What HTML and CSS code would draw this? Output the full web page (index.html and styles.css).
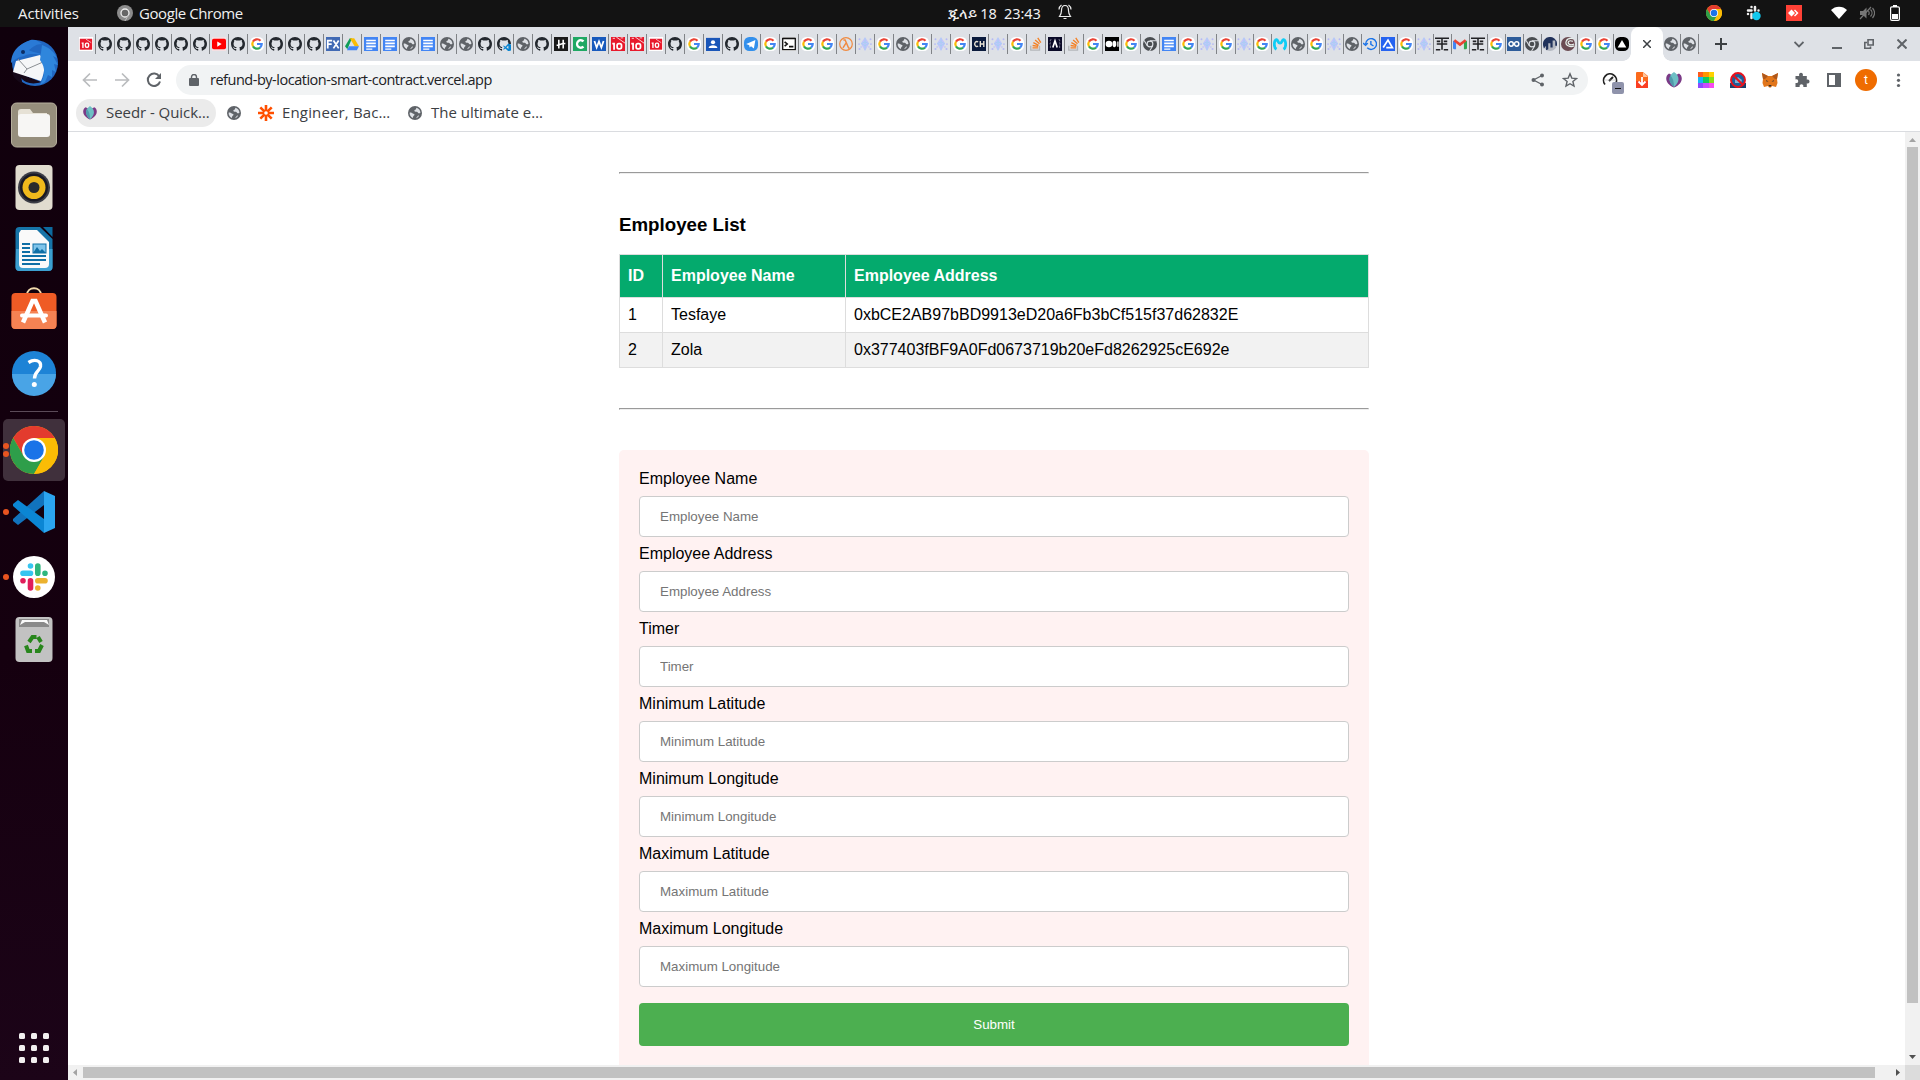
FILE: index.html
```html
<!DOCTYPE html>
<html lang="en">
<head>
<meta charset="utf-8">
<title>Refund by location</title>
<link rel="stylesheet" href="styles.css">
</head>
<body>
<svg class="defs" width="0" height="0">
  <symbol id="gh" viewBox="0 0 16 16"><path fill="#24292f" fill-rule="evenodd" d="M8 0C3.58 0 0 3.58 0 8c0 3.54 2.29 6.53 5.47 7.59.4.07.55-.17.55-.38 0-.19-.01-.82-.01-1.49-2.01.37-2.53-.49-2.69-.94-.09-.23-.48-.94-.82-1.13-.28-.15-.68-.52-.01-.53.63-.01 1.08.58 1.23.82.72 1.21 1.87.87 2.33.66.07-.52.28-.87.51-1.07-1.78-.2-3.64-.89-3.64-3.95 0-.87.31-1.59.82-2.15-.08-.2-.36-1.02.08-2.12 0 0 .67-.21 2.2.82a7.6 7.6 0 0 1 4 0c1.53-1.04 2.2-.82 2.2-.82.44 1.1.16 1.92.08 2.12.51.56.82 1.27.82 2.15 0 3.07-1.87 3.75-3.65 3.95.29.25.54.73.54 1.48 0 1.07-.01 1.93-.01 2.2 0 .21.15.46.55.38A8.01 8.01 0 0 0 16 8c0-4.42-3.58-8-8-8z"/></symbol>
  <symbol id="ghv" viewBox="0 0 16 16"><use href="#gh"/><path fill="#dee1e6" d="M6 8h10v8H6z"/><path fill="#0a84d0" d="M13 7.500l3 1.200v6.600l-3 1-3.500-3.200-1.700 1.400-.8-.7 1.700-1.600L7 10.400l.8-.7 1.700 1.400zM13 10l-2.300 1.800L13 13.600z"/></symbol>
  <symbol id="g" viewBox="0 0 16 16"><rect width="16" height="16" rx="6" fill="#fff"/><g fill="none" stroke-width="2.500"><path stroke="#ea4335" d="M3.400 5.300A5.400 5.400 0 0 1 12 4.300"/><path stroke="#fbbc05" d="M3.400 10.700a5.400 5.400 0 0 1 0-5.400"/><path stroke="#34a853" d="M11.500 12.100a5.400 5.400 0 0 1-8.100-1.400"/><path stroke="#4285f4" d="M8 8h5.400a5.400 5.400 0 0 1-1.900 4.100"/></g></symbol>
  <symbol id="globe" viewBox="0 0 16 16"><circle cx="8" cy="8" r="8" fill="#5f6368"/><path fill="#dee1e6" d="M1.800 7.700c1.200-.3 2.500-.2 3.200.5.500.7 1.800.4 2.300 1.200.4.700-.2 1.500-1 1.900-.7.400-.5 1.800-.6 2.500C3.400 12.900 1.700 10.600 1.800 7.700zM9.700 2c2.600.8 4.400 3 4.500 5.700-.7.500-1.500.9-2.300.5-.9-.5-.8-1.600-1.900-1.700-1-.1-2.300.3-2.700-.7-.3-1 .8-1.400 1.500-1.700.7-.4.200-1.300.9-2.100zM9.500 14c-.1-1 .8-1.200 1.200-2 .4-.7.900-1.200 2-1.100-.7 1.500-1.900 2.600-3.200 3.100z"/></symbol>
  <symbol id="docs" viewBox="0 0 16 16"><path fill="#4285f4" d="M0 0h16v16H0z"/><path fill="#fff" d="M2.500 3h11v1.800h-11zM2.500 6.400h11v1.800h-11zM2.500 9.800h11v1.800h-11zM2.500 13h7v1.500h-7z"/></symbol>
  <symbol id="io" viewBox="0 0 16 16"><path fill="#e8192c" d="M0 0h16v16H0z"/><path stroke="#fff" stroke-width=".9" fill="none" d="M6 0l10 7M2 1.500h2.500M11 1h3"/><path stroke="#fff" stroke-width="2" fill="none" d="M1.500 7.500h2V14.500"/><rect x="7" y="7.500" width="5" height="6" rx="2" fill="none" stroke="#fff" stroke-width="2"/></symbol>
  <symbol id="iow" viewBox="0 0 16 16"><path fill="#fff" d="M0 0h16v16H0z"/><path fill="#e8192c" d="M1 2h14v12.500H1z"/><path stroke="#fff" stroke-width="1.600" fill="none" d="M3 7h1.500v5.500"/><rect x="7.300" y="7" width="3.700" height="4.700" rx="1.500" fill="none" stroke="#fff" stroke-width="1.600"/><path stroke="#fff" stroke-width=".7" d="M8 2.500l6 4"/></symbol>
  <symbol id="yt" viewBox="0 0 16 16"><path fill="#f5dfe2" d="M0 0h16v16H0z"/><rect y="2" width="16" height="12" rx="2" fill="#f00"/><path fill="#fff" d="M6 5l5 3-5 3z"/></symbol>
  <symbol id="fx" viewBox="0 0 16 16"><path fill="#416ab4" d="M0 0h16v16H0z"/><path stroke="#fff" stroke-width="2" fill="none" d="M2 13V4h5M2 8h4.500M8.500 4l6 9M14.500 4l-6 9"/></symbol>
  <symbol id="drive" viewBox="0 0 16 16"><path fill="#0f9d58" d="M5.500 1.500h2.500L2.700 14 0 10.500z"/><path fill="#fbbc04" d="M5.500 1.500h5L16 10.500h-5z"/><path fill="#4285f4" d="M4.500 10.500H16L13.500 15H2.200z"/></symbol>
  <symbol id="hh" viewBox="0 0 16 16"><path fill="#1a1a1a" d="M0 0h16v16H0z"/><path stroke="#fff" stroke-width="1.800" fill="none" d="M5.500 3v10M10.500 3v10M3 9.500c3 0 3.500-2 10-2"/></symbol>
  <symbol id="cc" viewBox="0 0 16 16"><path fill="#1fa863" d="M0 0h16v16H0z"/><path stroke="#fff" stroke-width="2.600" fill="none" d="M12 5a4.300 4.300 0 1 0 0 6"/></symbol>
  <symbol id="ww" viewBox="0 0 16 16"><path fill="#185abd" d="M0 0h16v16H0z"/><path stroke="#fff" stroke-width="2" fill="none" d="M2.800 4.500L5.300 12 8 5l2.700 7 2.500-7.500"/></symbol>
  <symbol id="contact" viewBox="0 0 16 16"><path fill="#1a56b8" d="M0 1h16v15H0z"/><circle cx="8" cy="6" r="2.400" fill="#fff"/><path fill="#fff" d="M3 12.500c0-4 10-4 10 0z"/></symbol>
  <symbol id="tg" viewBox="0 0 16 16"><rect width="16" height="16" rx="6" fill="#3390ec"/><path fill="#fff" d="M2.500 8L13 3.500 11.300 13 8 10.500l-1.600 1.600L6 9.500z"/></symbol>
  <symbol id="term" viewBox="0 0 16 16"><path fill="#fff" d="M0 0h16v16H0z"/><path fill="none" stroke="#111" stroke-width="1.500" d="M.8 1.500h14.400v13H.8z"/><path fill="none" stroke="#111" stroke-width="1.800" d="M3 5.500L6 8l-3 2.500M8 11h5M.8 1.700h14.400"/></symbol>
  <symbol id="lam" viewBox="0 0 16 16"><circle cx="8" cy="8" r="7.200" fill="none" stroke="#f08a40" stroke-width="1.400"/><path stroke="#f08a40" stroke-width="1.700" fill="none" d="M5 3.500h2l4 9h1.200M8 7l-3.500 5.500"/></symbol>
  <symbol id="eth" viewBox="0 0 16 16"><path fill="#c3c5fb" d="M8 0l4.800 7.500L8 16 3.200 7.500z"/><path fill="none" stroke="#a5cff2" d="M8 1v14M4 7.500l4-2 4 2-4 2.500z"/><g fill="#b5b9f6"><circle cx="1.700" cy="2.500" r="1.100"/><circle cx="14.300" cy="2.500" r="1.100"/><circle cx="1.200" cy="8" r="1"/><circle cx="14.800" cy="8" r="1"/><circle cx="1.700" cy="13.700" r="1.200"/><circle cx="14.300" cy="13.700" r="1.200"/><circle cx="3.500" cy="11.500" r=".8"/><circle cx="12.500" cy="11.500" r=".8"/></g></symbol>
  <symbol id="ch" viewBox="0 0 16 16"><path fill="#0a1a3c" d="M0 0h16v16H0z"/><path stroke="#e8e2d4" stroke-width="1.600" fill="none" d="M7 5.700a2.500 2.800 0 1 0 0 4.600M9.500 4.500v7M13.500 4.500v7M9.500 8h4"/></symbol>
  <symbol id="so" viewBox="0 0 16 16"><path fill="none" stroke="#b4b7bb" stroke-width="1.500" d="M2 10v5h10v-5"/><path fill="none" stroke="#f48024" stroke-width="1.500" d="M4 12.500h6.500M4.100 9.700l6.400 1M5 6.500l6 3M7 3.500l5 4.300M10 1l3.500 5.500"/></symbol>
  <symbol id="aa" viewBox="0 0 16 16"><path fill="#0a0a28" d="M0 0h16v16H0z"/><path fill="none" stroke="#fff" stroke-width="1.900" d="M5.500 12L8 4.500l2.500 7.500"/><path fill="none" stroke="#99a" stroke-width="1" stroke-dasharray="2.500 1.500" d="M3.500 2.500c-2 2 .5 3.500-1.500 5.500 2 2-.5 4 1.500 5.500M12.500 2.500c2 2-.5 3.500 1.500 5.500-2 2 .5 4-1.500 5.500"/></symbol>
  <symbol id="med" viewBox="0 0 16 16"><path d="M0 0h16v16H0z"/><circle cx="4.500" cy="8" r="3.800" fill="#fff"/><ellipse cx="10.700" cy="8" rx="2.200" ry="3.600" fill="#fff"/><path fill="#fff" d="M14 5h1.500v6H14z"/></symbol>
  <symbol id="chg" viewBox="0 0 16 16"><circle cx="8" cy="8" r="8" fill="#4a4d51"/><circle cx="8" cy="8" r="3.300" fill="#4a4d51" stroke="#dee1e6" stroke-width="1.300"/><path stroke="#dee1e6" stroke-width="1.200" d="M8 4.300h7M4.900 10L1.300 4M11.200 10L7.500 16"/></symbol>
  <symbol id="mm" viewBox="0 0 16 16"><path fill="none" stroke="#10cdf5" stroke-width="3.200" d="M4 14C0 11.500 1.500 2.500 4 3c2 .5 1.500 4 4 4s2-3.500 4-4c2.500-.5 4 8.500 0 11"/></symbol>
  <symbol id="hist" viewBox="0 0 16 16"><path fill="none" stroke="#1a73e8" stroke-width="1.600" d="M3 8a6.200 6.200 0 1 1 1.800 4.400M9 4.500V8.500l3 1.800M0 7l3 2.500L5.500 7"/></symbol>
  <symbol id="al" viewBox="0 0 16 16"><path fill="#2563f0" d="M0 0h16v16H0z"/><path fill="none" stroke="#fff" stroke-width="2" d="M2.500 12L8 3.500l5 8.500H6"/></symbol>
  <symbol id="ww2" viewBox="0 0 16 16"><path fill="none" stroke="#202124" stroke-width="1.800" d="M0 1.500h16M8 1.500v13M2 8h12M1 14.500h5M10 14.500h5M2 5h4M10 5h4"/></symbol>
  <symbol id="gm" viewBox="0 0 16 16"><path fill="#4285f4" d="M0 4l3.500 2v8H1.200L0 13z"/><path fill="#34a853" d="M16 4l-3.500 2v8h2.300l1.200-1z"/><path fill="none" stroke="#ea4335" stroke-width="3" d="M1.500 3.700L8 8.700l6.500-5"/></symbol>
  <symbol id="co" viewBox="0 0 16 16"><path fill="#2d5c9a" d="M0 0h16v16H0z"/><g fill="none" stroke="#fff" stroke-width="1.700"><circle cx="4.700" cy="8" r="2.500"/><circle cx="11" cy="8" r="2.500"/></g></symbol>
  <symbol id="bars" viewBox="0 0 16 16"><circle cx="8" cy="8" r="8" fill="#b4b8c1"/><path fill="#21325b" d="M0 9A8 8 0 0 1 16 7v3h-2V4h-3v8H8.500V7H6v7L3.500 15v-5L1 13z"/></symbol>
  <symbol id="swirl" viewBox="0 0 16 16"><circle cx="8" cy="8" r="8" fill="#6b4b52"/><path stroke="#e8f3ee" stroke-width="1.400" fill="none" d="M14 2C5 0 4 8 8 10s7 0 7 0M13.500 5C9 3 7 6 9 8s6 0 6 0"/></symbol>
  <symbol id="vc" viewBox="0 0 16 16"><rect width="16" height="16" rx="6"/><path fill="#fff" d="M8 3.500l5 8.500H3z"/></symbol>
  <symbol id="chrome" viewBox="0 0 48 48"><circle cx="24" cy="24" r="24" fill="#fbbc05"/><path fill="#e33b2e" d="M24 12h20.800A24 24 0 0 0 3.200 12l10.400 18z"/><path fill="#2e9e4a" d="M3.200 12A24 24 0 0 0 24 48l10.400-18L24 24l-10.400 6z"/><path fill="#fbbc05" d="M44.800 12H24l10.400 18L24 48a24 24 0 0 0 20.800-36z"/><circle cx="24" cy="24" r="12" fill="#fff"/><circle cx="24" cy="24" r="9.800" fill="#1a73e8"/></symbol>
  <symbol id="seedr" viewBox="0 0 16 16"><path fill="#7a3a86" d="M3 1.500C-1.500 4-1 12 8 15.500 17 12 17.500 4 13 1.500L8 4z"/><path fill="#6dbfc4" d="M8 0c6 4 6 10 0 15C2 10 2 4 8 0z"/><path fill="#4f9aab" d="M8 15C3 11 2.800 6.500 4.500 3.500 7 6 8 10 8 15z"/></symbol>
  <symbol id="slack" viewBox="0 0 28 28"><g stroke-width="5.600" stroke-linecap="round"><path stroke="#36c5f0" d="M3 10.200h7.500M10.500 3v0"/><path stroke="#2eb67d" d="M17.800 3v7.200M25 10.200v0"/><path stroke="#ecb22e" d="M17.800 17.700h7.200M17.800 25v0"/><path stroke="#e01e5a" d="M10.500 17.700v7.300M3 17.700v0"/></g></symbol>
</svg>

<header class="topbar">
  <span class="activities">Activities</span>
  <div class="app-menu">
    <svg class="i16" viewBox="0 0 16 16"><circle cx="8" cy="8" r="8" fill="#8c8c8c"/><circle cx="8" cy="8" r="4" fill="#666" stroke="#eee" stroke-width="1.300"/><path stroke="#bbb" d="M11.500 10L8 16"/></svg>
    <span>Google Chrome</span>
  </div>
  <div class="clock">
    <span>ጁላይ 18&nbsp; 23:43</span>
    <svg width="14" height="16" viewBox="0 0 14 16" fill="none" stroke="#eee" stroke-width="1.200"><path d="M7 1.500C4 1.500 3.500 4 3.500 6.500c0 3-.5 4-2 6h11c-1.500-2-2-3-2-6C10.500 4 10 1.500 7 1.500zM5.500 14.500h3M3.500 1C2 2 1 3.500 1 5.500M10.500 1C12 2 13 3.500 13 5.500"/></svg>
  </div>
  <div class="tray">
    <svg class="i16" viewBox="0 0 48 48"><use href="#chrome"/></svg>
    <svg class="tray-slack" width="16" height="16" viewBox="0 0 16 16"><g stroke="#eee" stroke-width="2.500" stroke-linecap="round"><path d="M2 5.500h3.500M5.500 2v0M9 2v3.500M12.500 5.500v0M2 9v0M5.500 9v4"/></g><circle cx="10.500" cy="11" r="4.200" fill="#12c8ee"/></svg>
    <svg class="i16 tray-any" viewBox="0 0 16 16"><path fill="#ff4136" d="M0 0h16v16H0z"/><path fill="#fff" d="M5.500 4.500L9 8l-3.500 3.500L2 8zM9 4.500L12.500 8 9 11.500l-1-1L10.500 8 8 5.500z"/></svg>
    <svg class="tray-wifi" width="16" height="14" viewBox="0 0 16 14"><path fill="#fff" d="M0 4C4-.5 12-.5 16 4L8 13z"/></svg>
    <svg class="tray-mute" width="16" height="14" viewBox="0 0 16 14"><path fill="#777" d="M1 5h3l3.500-3.500v11L4 9H1z"/><path fill="none" stroke="#777" stroke-width="1.200" d="M1 13L12 1M9.500 5c1 1.500 1 2.500 0 4M11.500 3.500c2 2 2 5 0 7M13.500 2c2.500 3 2.500 7 0 10"/></svg>
    <svg class="tray-batt" width="10" height="16" viewBox="0 0 10 16"><path fill="#fff" d="M3 0h4v2H3zM2 9h6v5H2z"/><rect x=".6" y="1.800" width="8.800" height="13.600" rx="1.300" fill="none" stroke="#fff" stroke-width="1.200"/></svg>
  </div>
</header>

<div class="desktop">
  <nav class="dock">
    <div class="dock-item"><svg viewBox="0 0 48 48"><circle cx="25" cy="24" r="23" fill="#2167c2"/><path fill="#160818" d="M3 32l6 2 22 9c-8 3-16 1-20-4 2 4 0 5 2 6C6 42 1 36 3 32z"/><path fill="#f5f6f8" d="M6 22l24-6c6 6 5 17 1 26L3 33z"/><path fill="none" stroke="#8b8f94" d="M8 20l9 10 16-7M17 30l-3 4"/><path fill="#2a7ad6" d="M1 24C2 10 10 6 18 2c6-3 10 0 14 3-6 0-9 3-13 6 2 2 9 2 14 5-8-1-14-2-19 1C8 18 4 21 1 24z"/><path fill="#2f86dc" d="M32 6c8 3 12 7 15 13l-4-2 5 9-4-1 2 8-4-2v7l-4-2-3 7-5 3c5-9 6-17 0-25z"/><circle cx="13" cy="13" r="2" fill="#0b2d66"/></svg></div>
    <div class="dock-item"><svg viewBox="0 0 48 48"><rect x="1.500" y="2" width="45" height="44" rx="5" fill="#968e7c" stroke="#b6af9d"/><path fill="#e6e1d5" d="M8 14v-3c0-2 1-3 3-3h9l3 4h14v6H8z"/><rect x="8" y="13" width="32" height="23" rx="3" fill="#f7f6f4"/></svg></div>
    <div class="dock-item"><svg viewBox="0 0 48 48"><rect x="5.500" y="2" width="37" height="45" rx="4" fill="#e1dccf"/><circle cx="24" cy="24.500" r="16" fill="#3c3d46"/><circle cx="24" cy="24.500" r="14" fill="#1a1a24"/><circle cx="24" cy="24.500" r="11.500" fill="#f0b91c"/><circle cx="24" cy="24.500" r="5.500" fill="#2b2b2b"/></svg></div>
    <div class="dock-item"><svg viewBox="0 0 48 48"><path fill="#1674a8" d="M10 2h20l12.500 12v28a4 4 0 0 1-4 4h-29a4 4 0 0 1-4-4V6a4 4 0 0 1 4-4z"/><path fill="#3c9fd0" d="M6 24h36.500v18a4 4 0 0 1-4 4h-29a4 4 0 0 1-4-4z"/><path fill="#fafafa" d="M11 5h16l12 12v22a4 4 0 0 1-4 4H13a4 4 0 0 1-4-4V8z"/><path fill="#0c6a9e" d="M33 2h9.500v10z"/><path stroke="#0f6fa6" stroke-width="1.800" d="M12 19h8M12 23h8M12 27h8M12 31h24M12 35h24M12 39h18"/><rect x="23" y="19" width="13" height="9" fill="#7fc4ea" stroke="#0f6fa6"/><path fill="#0f6fa6" d="M23 28l4-6 3 4 2-2 4 4z"/></svg></div>
    <div class="dock-item"><svg class="raised" viewBox="0 0 48 48"><path fill="none" stroke="#f3dcae" stroke-width="1.800" d="M17 9c0-9 14-9 14 0"/><rect x="1.500" y="7" width="45" height="36" rx="4" fill="#ef5b25"/><path fill="#f58253" d="M1.500 25h45v14a4 4 0 0 1-4 4h-37a4 4 0 0 1-4-4z"/><path fill="none" stroke="#fff" stroke-width="4.500" d="M13 36.500L22.500 15h3L35 36.500"/><path stroke="#fff" stroke-width="4" stroke-linecap="round" d="M12 29.500h24"/></svg></div>
    <div class="dock-item"><svg viewBox="0 0 48 48"><circle cx="24" cy="24" r="22" fill="#1d83d6"/><path fill="#49a4e6" d="M2 25h44a22 22 0 0 1-44 0z"/><path fill="none" stroke="#fff" stroke-width="3.400" d="M18.500 13.500c6-4 13-2 12 4-1 5-6 5-6 12"/><circle cx="24.300" cy="35.500" r="2.500" fill="#fff"/></svg></div>
    <div class="dock-sep"></div>
    <div class="dock-item active two"><svg viewBox="0 0 48 48"><use href="#chrome"/></svg></div>
    <div class="dock-item one"><svg viewBox="0 0 48 48"><path fill="#1173bd" d="M34 3v14L8 37l-5-4v-2z"/><path fill="#0b86d4" d="M34 45V31L8 12l-5 4v2z"/><path fill="#2ba5f0" d="M34 3l11 5v32l-11 5z"/></svg></div>
    <div class="dock-item one low"><svg viewBox="0 0 48 48"><circle cx="24" cy="24" r="21" fill="#fff"/><use href="#slack" x="10" y="10" width="28" height="28"/></svg></div>
    <div class="dock-item"><svg viewBox="0 0 48 48"><rect x="5.500" y="2" width="37" height="45" rx="4" fill="#c2c2c2"/><path fill="#8a8a8a" d="M9 4h30v8H9z"/><path fill="#fafafa" d="M10 10l2-5h25l2 5-5-3H15z"/><g fill="none" stroke="#28861c" stroke-width="4"><path d="M19 27l3.500-5h4M28 22l3 5M32 30l-3 6h-4M22 36h-4l-2-5.500"/></g></svg></div>
    <div class="apps"><i></i><i></i><i></i><i></i><i></i><i></i><i></i><i></i><i></i></div>
  </nav>

  <main class="browser">
    <div class="tabstrip">
      <div class="tabs wide">
        <svg><use href="#iow"/></svg><svg><use href="#gh"/></svg><svg><use href="#gh"/></svg><svg><use href="#gh"/></svg><svg><use href="#gh"/></svg><svg><use href="#gh"/></svg><svg><use href="#gh"/></svg><svg><use href="#yt"/></svg><svg><use href="#gh"/></svg><svg><use href="#g"/></svg><svg><use href="#gh"/></svg><svg><use href="#gh"/></svg><svg><use href="#gh"/></svg><svg><use href="#fx"/></svg><svg><use href="#drive"/></svg><svg><use href="#docs"/></svg><svg><use href="#docs"/></svg><svg><use href="#globe"/></svg><svg><use href="#docs"/></svg><svg><use href="#globe"/></svg><svg><use href="#globe"/></svg>
        <svg><use href="#gh"/></svg><svg><use href="#ghv"/></svg><svg><use href="#globe"/></svg><svg><use href="#gh"/></svg><svg><use href="#hh"/></svg><svg><use href="#cc"/></svg><svg><use href="#ww"/></svg><svg><use href="#io"/></svg><svg><use href="#io"/></svg><svg><use href="#iow"/></svg><svg><use href="#gh"/></svg><svg><use href="#g"/></svg><svg><use href="#contact"/></svg><svg><use href="#gh"/></svg><svg><use href="#tg"/></svg><svg><use href="#g"/></svg><svg><use href="#term"/></svg><svg><use href="#g"/></svg><svg><use href="#g"/></svg><svg><use href="#lam"/></svg><svg><use href="#eth"/></svg><svg><use href="#g"/></svg><svg><use href="#globe"/></svg><svg><use href="#g"/></svg><svg><use href="#eth"/></svg><svg><use href="#g"/></svg>
        <svg><use href="#ch"/></svg><svg><use href="#eth"/></svg><svg><use href="#g"/></svg><svg><use href="#so"/></svg><svg><use href="#aa"/></svg><svg><use href="#so"/></svg><svg><use href="#g"/></svg><svg><use href="#med"/></svg><svg><use href="#g"/></svg><svg><use href="#chg"/></svg><svg><use href="#docs"/></svg><svg><use href="#g"/></svg><svg><use href="#eth"/></svg><svg><use href="#g"/></svg>
      </div>
      <div class="tabs narrow">
        <svg><use href="#eth"/></svg><svg><use href="#g"/></svg><svg><use href="#mm"/></svg><svg><use href="#globe"/></svg><svg><use href="#g"/></svg><svg><use href="#eth"/></svg><svg><use href="#globe"/></svg><svg><use href="#hist"/></svg><svg><use href="#al"/></svg><svg><use href="#g"/></svg><svg><use href="#eth"/></svg><svg><use href="#ww2"/></svg><svg><use href="#gm"/></svg><svg><use href="#ww2"/></svg><svg><use href="#g"/></svg><svg><use href="#co"/></svg><svg><use href="#chg"/></svg><svg><use href="#bars"/></svg><svg><use href="#swirl"/></svg><svg><use href="#g"/></svg><svg><use href="#g"/></svg><svg class="last"><use href="#vc"/></svg>
      </div>
      <div class="tab-active"><svg width="8" height="8" viewBox="0 0 8 8"><path stroke="#3c4043" stroke-width="1.500" d="M0 0l8 8M8 0L0 8"/></svg></div>
      <div class="tabs narrow after"><svg><use href="#globe"/></svg><svg><use href="#globe"/></svg></div>
      <svg class="newtab" width="12" height="12" viewBox="0 0 12 12"><path stroke="#3c4043" stroke-width="2" d="M6 0v12M0 6h12"/></svg>
      <div class="winctl">
        <svg width="10" height="7" viewBox="0 0 10 7"><path fill="none" stroke="#5f6368" stroke-width="1.800" d="M.5 1L5 5.500 9.500 1"/></svg>
        <svg width="10" height="10" viewBox="0 0 10 10"><path fill="#5f6368" d="M0 8h10v2H0z"/></svg>
        <svg width="10" height="10" viewBox="0 0 10 10"><path fill="none" stroke="#5f6368" stroke-width="1.600" d="M4 .8h5.200v5.200H4zM3 3.500H.8v5.700h5.700V7.500"/></svg>
        <svg width="10" height="10" viewBox="0 0 10 10"><path stroke="#5f6368" stroke-width="2" d="M.5.500l9 9M9.500.5l-9 9"/></svg>
      </div>
    </div>

    <div class="toolbar">
      <div class="nav">
        <svg width="16" height="16" viewBox="0 0 16 16" fill="none" stroke="#babcbe" stroke-width="1.700"><path d="M15 8H2M8 1.500L1.500 8 8 14.500"/></svg>
        <svg width="16" height="16" viewBox="0 0 16 16" fill="none" stroke="#babcbe" stroke-width="1.700"><path d="M1 8h13M8 1.500L14.500 8 8 14.500"/></svg>
        <svg width="16" height="16" viewBox="0 0 16 16"><path fill="none" stroke="#5f6368" stroke-width="2" d="M13.300 4.500A6.200 6.200 0 1 0 14 9.500"/><path fill="#5f6368" d="M15 1v6H9z"/></svg>
      </div>
      <div class="omnibox">
        <svg width="10" height="12" viewBox="0 0 10 12"><rect y="4" width="10" height="8" rx="1" fill="#5f6368"/><path fill="none" stroke="#5f6368" stroke-width="1.400" d="M2.500 5V3a2.500 2.500 0 0 1 5 0v2"/></svg>
        <span class="url">refund-by-location-smart-contract.vercel.app</span>
        <svg width="14" height="14" viewBox="0 0 14 14"><g fill="#5f6368"><circle cx="2.500" cy="7" r="2"/><circle cx="11" cy="2.500" r="2"/><circle cx="11" cy="11.500" r="2"/></g><path fill="none" stroke="#5f6368" stroke-width="1.300" d="M11 2.500L2.500 7l8.500 4.500"/></svg>
        <svg class="star" width="16" height="16" viewBox="0 0 16 16"><path fill="none" stroke="#5f6368" stroke-width="1.400" d="M8 1.800l1.800 4.300 4.700.4-3.600 3 1.100 4.600L8 11.700l-4 2.400 1.100-4.600-3.600-3 4.700-.4z"/></svg>
      </div>
      <div class="exts">
        <div class="ext"><svg class="i16" viewBox="0 0 16 16"><path fill="none" stroke="#222" stroke-width="1.700" d="M3 12.500a6.500 6.500 0 1 1 11-1.500"/><path stroke="#222" stroke-width="2" d="M7 9l4-4"/><path stroke="#aaa" stroke-dasharray="1 1" d="M3.500 8h9"/></svg><b class="badge"></b></div>
        <div class="ext"><svg class="i16" viewBox="0 0 16 16"><path fill="#fb6a1c" d="M2 1a1 1 0 0 1 1-1h6l5 4v12H2z"/><path fill="#fa3e22" d="M2 9h12v7H2z"/><path fill="#ffc49a" d="M9 0l5 5H9z"/><path fill="none" stroke="#fff" stroke-width="1.800" d="M8 5v8M4.500 9.500L8 13l3.500-3.500"/></svg></div>
        <div class="ext"><svg class="i16" viewBox="0 0 16 16"><use href="#seedr"/></svg></div>
        <div class="ext"><svg class="i16" viewBox="0 0 16 16" shape-rendering="crispEdges"><path fill="#ff5a1c" d="M0 0h5v5H0z"/><path fill="#ff9500" d="M5 0h6v5H5z"/><path fill="#ffd000" d="M11 0h5v5h-5z"/><path fill="#17b7f5" d="M0 5h5v6H0z"/><path fill="#13c95c" d="M5 5h6v6H5z"/><path fill="#87e01b" d="M11 5h5v6h-5z"/><path fill="#8c4bff" d="M0 11h5v5H0z"/><path fill="#c94cff" d="M5 11h6v5H5z"/><path fill="#f94cf0" d="M11 11h5v5h-5z"/></svg></div>
        <div class="ext"><svg class="i16" viewBox="0 0 16 16"><path fill="#1d3f6a" d="M0 11h16v5H0z"/><circle cx="8" cy="8" r="7" fill="#1d5f9a"/><path fill="#7fb0d4" d="M5 8l3-3 4 3-1 3H5z"/><circle cx="8" cy="8" r="7" fill="none" stroke="#e8121c" stroke-width="1.900"/><path stroke="#e8121c" stroke-width="2" d="M3 3l10 10"/></svg></div>
        <div class="ext"><svg class="i16" viewBox="0 0 16 16"><path fill="#e2761b" d="M0 1l6 3h4l6-3-1 6 .5 4-1.500 4-4-1-1 1.500H7L6 14l-4 1L.5 11 1 7z"/><path fill="#b0581b" d="M0 1l6 3-3 3H1zM16 1l-6 3 3 3h2z"/><path fill="#333" d="M4 8l2.500 1.500H4.500zM12 8L9.500 9.500h2zM6.500 13h3L9 14.500H7z"/></svg></div>
        <div class="ext"><svg class="i16" viewBox="0 0 16 16"><path fill="#5f6368" d="M1.500 4h3.700C4.500 1.500 6 .8 7 .8S9.500 1.500 8.800 4h4v3.800c2-.7 2.700.7 2.700 1.700s-.7 2.400-2.700 1.700V15H9.300c.5-2-.6-2.800-1.800-2.800S5.200 13 5.700 15H1.500v-4c2 .4 2.700-.6 2.700-1.800S3.500 7 1.500 7.500z"/></svg></div>
        <div class="ext"><svg class="i16" viewBox="0 0 16 16"><path fill="#5f6368" fill-rule="evenodd" d="M1 1h14v14H1zM3 3v10h6V3z"/></svg></div>
        <div class="ext"><span class="avatar">t</span></div>
        <div class="ext"><svg class="i16" viewBox="0 0 16 16" fill="#5f6368"><circle cx="8.500" cy="3" r="1.600"/><circle cx="8.500" cy="8.300" r="1.600"/><circle cx="8.500" cy="13.500" r="1.600"/></svg></div>
      </div>
    </div>

    <div class="bookmarks">
      <div class="bm hover"><svg width="14" height="14"><use href="#seedr"/></svg><span class="t1">Seedr - Quick…</span></div>
      <div class="bm b2"><svg width="14" height="14"><use href="#globe"/></svg></div>
      <div class="bm b3"><svg class="i16" viewBox="0 0 16 16"><path stroke="#ff4f00" stroke-width="2.600" d="M8 0v16M0 8h16M2.300 2.300l11.400 11.400M13.700 2.300L2.300 13.700"/><circle cx="8" cy="8" r="1.800" fill="#fff"/></svg><span class="t2">Engineer, Bac…</span></div>
      <div class="bm b4"><svg width="14" height="14"><use href="#globe"/></svg><span class="t3">The ultimate e…</span></div>
    </div>

    <div class="viewport">
      <div class="page">
        <div class="content">
          <hr>
          <h3>Employee List</h3>
          <table>
            <tr><th class="c-id">ID</th><th class="c-name">Employee Name</th><th>Employee Address</th></tr>
            <tr><td>1</td><td>Tesfaye</td><td>0xbCE2AB97bBD9913eD20a6Fb3bCf515f37d62832E</td></tr>
            <tr><td>2</td><td>Zola</td><td>0x377403fBF9A0Fd0673719b20eFd8262925cE692e</td></tr>
          </table>
          <hr>
          <form>
            <label>Employee Name</label><input placeholder="Employee Name">
            <label>Employee Address</label><input placeholder="Employee Address">
            <label>Timer</label><input placeholder="Timer">
            <label>Minimum Latitude</label><input placeholder="Minimum Latitude">
            <label>Minimum Longitude</label><input placeholder="Minimum Longitude">
            <label>Maximum Latitude</label><input placeholder="Maximum Latitude">
            <label>Maximum Longitude</label><input placeholder="Maximum Longitude">
            <button type="button">Submit</button>
          </form>
        </div>
      </div>
      <div class="vbar">
        <svg width="7" height="4" viewBox="0 0 7 4"><path fill="#a3a3a3" d="M3.500 0L7 4H0z"/></svg>
        <div class="vthumb"></div>
        <svg class="down" width="7" height="4" viewBox="0 0 7 4"><path fill="#505050" d="M0 0h7L3.500 4z"/></svg>
      </div>
      <div class="hbar">
        <svg width="4" height="7" viewBox="0 0 4 7"><path fill="#a3a3a3" d="M4 0v7L0 3.500z"/></svg>
        <div class="hthumb"></div>
        <svg class="right" width="4" height="7" viewBox="0 0 4 7"><path fill="#505050" d="M0 0l4 3.500L0 7z"/></svg>
      </div>
      <div class="corner"></div>
    </div>
  </main>
</div>
</body>
</html>
```
FILE: styles.css
```css
* { box-sizing: border-box; }
body { margin: 0; width: 1920px; height: 1080px; overflow: hidden; background: #fff; font-family: "Open Sans", "Noto Sans", sans-serif; }
svg { display: block; flex: none; }
.defs { position: absolute; }
.i16 { width: 16px; height: 16px; }

/* system bar */
.topbar { height: 27px; background: #131313; color: #f0f0f0; font-size: 15px; line-height: 27px; display: grid; grid-template-columns: 117px 831px 838px 1fr; white-space: nowrap; }
.activities { padding-left: 18px; letter-spacing: -0.1px; }
.app-menu { display: flex; align-items: center; gap: 6px; letter-spacing: -0.43px; }
.app-menu svg { margin-top: -1px; }
.clock { display: flex; align-items: center; justify-content: space-between; width: 124px; font-family: "Noto Sans", sans-serif; font-size: 14.500px; letter-spacing: -0.1px; }
.clock svg { margin-top: -3px; }
.tray { display: flex; align-items: center; margin-left: -80px; height: 26px; }
.tray-slack { margin-left: 24px; }
.tray-any { margin-left: 24px; }
.tray-wifi { margin-left: 29px; }
.tray-mute { margin-left: 12px; }
.tray-batt { margin-left: 15px; margin-top: -1px; }

.desktop { display: flex; height: 1053px; }

/* dock */
.dock { width: 68px; flex: none; padding: 5px 3px 0; background: linear-gradient(#10000c, #15000f 60%, #1c0418); display: flex; flex-direction: column; }
.dock-item { height: 62px; display: grid; place-items: center; position: relative; border-radius: 5px; flex: none; }
.dock-item svg { width: 48px; height: 48px; }
.dock-item svg.raised { margin-top: -3px; }
.dock-item.active { background: #40303c; }
.dock-item.low { margin-top: 3px; }
.dock-item.one::before, .dock-item.two::before { content: ""; position: absolute; left: 0; top: 28px; width: 6px; height: 6px; border-radius: 50%; background: #e95420; }
.dock-item.two::before { top: 24px; box-shadow: 0 8px 0 #e95420; }
.dock-sep { height: 1px; margin: 7px 7px; background: #5b4b58; flex: none; }
.apps { margin: auto auto 17px 16px; display: grid; grid-template-columns: repeat(3, 6px); gap: 6px; }
.apps i { width: 6px; height: 6px; border-radius: 1.500px; background: #f2f0f0; }

/* browser chrome */
.browser { width: 1852px; display: flex; flex-direction: column; }
.tabstrip { height: 34px; flex: none; background: #dee1e6; display: flex; align-items: center; padding-left: 9px; }
.tabs { display: flex; }
.tabs svg { height: 20px; padding: 3px 2px; border-right: 1px solid #808387; }
.wide svg { width: 19px; }
.narrow svg { width: 18px; padding: 3px 2px 3px 1px; }
.narrow svg.last { border-right: 0; width: 17px; }
.tab-active { width: 32px; height: 34px; background: #fff; border-radius: 8px 8px 0 0; display: grid; place-items: center; position: relative; }
.tab-active::before, .tab-active::after { content: ""; position: absolute; bottom: 0; width: 8px; height: 8px; }
.tab-active::before { left: -8px; background: radial-gradient(circle at 0 0, #dee1e6 7.500px, #fff 8px); }
.tab-active::after { right: -8px; background: radial-gradient(circle at 100% 0, #dee1e6 7.500px, #fff 8px); }
.newtab { margin-left: 16px; }
.winctl { margin-left: auto; padding-right: 13px; display: flex; align-items: center; }
.winctl svg:nth-child(2) { margin-left: 28px; }
.winctl svg:nth-child(3) { margin-left: 22px; }
.winctl svg:nth-child(4) { margin-left: 23px; }

.toolbar { height: 34px; flex: none; display: flex; align-items: flex-end; }
.nav { width: 108px; height: 30px; padding-left: 14px; display: flex; align-items: center; gap: 16px; }
.omnibox { width: 1412px; height: 30px; border-radius: 15px; background: #f1f3f4; display: flex; align-items: center; padding: 0 10px 0 13px; }
.url { margin: -2px auto 0 11px; font-size: 14.500px; letter-spacing: -0.48px; color: #202124; }
.star { margin-left: 17px; }
.exts { display: flex; height: 30px; align-items: center; margin-left: 6px; }
.ext { width: 32px; height: 30px; display: grid; place-items: center; position: relative; }
.badge { position: absolute; left: 18px; top: 17px; width: 12px; height: 12px; border-radius: 2px; background: #8f93ab; }
.badge::after { content: ""; position: absolute; left: 3px; top: 6px; width: 6px; height: 1px; background: #111; }
.avatar { width: 22px; height: 22px; border-radius: 50%; background: #ef6c00; color: #fff; font: 12px/22px Roboto, sans-serif; text-align: center; }

.bookmarks { height: 37px; flex: none; border-bottom: 1px solid #dadce0; padding: 4px 0 0 8px; display: flex; align-items: flex-start; font-size: 15px; color: #3c4043; white-space: nowrap; }
.bm { height: 28px; display: flex; align-items: center; }
.bm span { margin-top: -2px; }
.bm svg { margin-top: -1px; }
.hover { width: 140px; background: #ebebeb; border-radius: 14px; padding-left: 7px; }
.hover span { margin-left: 9px; letter-spacing: -0.05px; }
.b2 { margin-left: 11px; width: 31px; }
.b3 { width: 150px; }
.b3 span { margin-left: 8px; letter-spacing: 0.15px; }
.b4 span { margin-left: 9px; }

/* page area with its scrollbars */
.viewport { flex: 1; display: grid; grid-template: 933px 15px / 1837px 15px; }
.page { overflow: hidden; font-family: "Liberation Sans", Arial, sans-serif; font-size: 16px; color: #000; }
.content { width: 750px; margin: 40px 0 0 551px; }
hr { margin: 0 0 40px; }
h3 { margin: 0 0 18px; font-size: 18.720px; line-height: 22px; }
table { width: 750px; border-collapse: collapse; table-layout: fixed; margin-bottom: 40px; line-height: 18px; }
th, td { border: 1px solid #ddd; padding: 8px; text-align: left; }
th { padding: 12px 8px; background: #04aa6d; color: #fff; }
tr:last-child { background: #f2f2f2; }
.c-id { width: 43px; }
.c-name { width: 183px; }
form { background: #fff2f2; border-radius: 5px; padding: 20px; }
label { display: block; line-height: 18px; }
input { display: block; width: 100%; height: 41px; margin: 8px 0; padding: 12px 20px; border: 1px solid #ccc; border-radius: 4px; background: #fff; font: 13.333px "Liberation Sans", Arial, sans-serif; }
button { display: block; width: 100%; height: 43px; margin: 16px 0 8px; border: 0; border-radius: 4px; background: #4caf50; color: #fff; font: 13.333px "Liberation Sans", Arial, sans-serif; }

.vbar { background: #f1f1f1; display: flex; flex-direction: column; align-items: center; padding: 6px 0; }
.vthumb { width: 11px; height: 856px; margin-top: 5px; background: #c1c1c1; }
.down { margin-top: auto; }
.hbar { background: #f1f1f1; display: flex; align-items: center; padding: 0 5px; }
.hthumb { width: 1792px; height: 11px; margin-left: 6px; background: #c1c1c1; }
.right { margin-left: auto; }
.corner { background: #dcdcdc; }
```
